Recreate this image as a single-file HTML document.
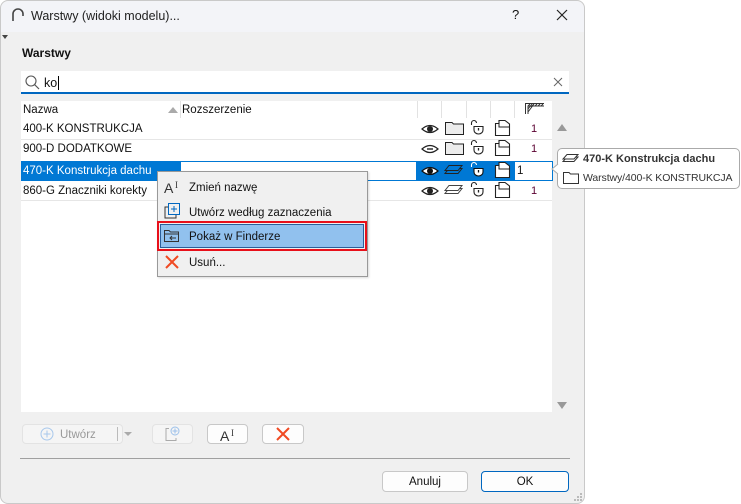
<!DOCTYPE html>
<html><head><meta charset="utf-8"><style>
*{box-sizing:border-box;margin:0;padding:0}
body{width:741px;height:504px;background:#fff;font-family:"Liberation Sans",sans-serif;font-size:11.5px;color:#111;position:relative;overflow:hidden}
.a{position:absolute}
.t{position:absolute;white-space:nowrap;line-height:14px}
svg{position:absolute;overflow:visible}
.btn{position:absolute;background:#fdfdfd;border:1px solid #c8c8c8;border-radius:4px}
.rowline{position:absolute;left:21px;width:531px;height:1px;background:#e6e6e6}
.num{position:absolute;font-size:11px;color:#5a0030;width:20px;text-align:center}
.ai{position:absolute;font-size:14px;color:#333;line-height:14px}
.ai b{position:absolute;font-weight:normal;font-size:9px;left:11px;top:-3px;font-family:"Liberation Serif",serif}
</style></head><body>
<svg width="0" height="0" style="position:absolute">
<defs>
<g id="eye"><path d="M1 6 Q9 -1 17 6 Q9 13 1 6Z" fill="none" stroke="#222" stroke-width="1.2"/><circle cx="9" cy="6" r="3" fill="#222"/></g>
<g id="eye2"><path d="M1 6 Q9 -1 17 6 Q9 13 1 6Z" fill="none" stroke="#222" stroke-width="1.2"/><path d="M6 6 H12" stroke="#222" stroke-width="1.4"/></g>
<g id="fold"><path d="M0.5 2.5 H7 L8.5 4 H18.5 V14.5 H0.5Z" fill="#ececec" stroke="#222"/></g>
<g id="lock"><path d="M1.5 5 V3 A2.5 2.5 0 0 1 6.5 3" fill="none" stroke="#222" stroke-width="1.1"/><path d="M4 6.5 H13 V10 A4.5 4 0 0 1 4 10Z" fill="#fff" stroke="#222" stroke-width="1.1"/><path d="M8.5 8 V10.5" stroke="#222" stroke-width="1.3"/></g>
<g id="page"><path d="M0.5 3.5 H4 V0.5 H10 L14.5 4 V15.5 H0.5Z" fill="#fff" stroke="#222" stroke-width="1.1"/><path d="M4 3.5 V7 H14.5" fill="none" stroke="#222"/></g>
<g id="plane"><path d="M4 3.5 H17 L13 8.5 H0Z" fill="none" stroke="#444"/><path d="M4 0.5 H17 L13 5.5 H0Z" fill="#fff" stroke="#444"/></g>
</defs></svg>

<div class="a" style="left:0;top:0;width:585px;height:504px;background:#f0f0f0;border:1px solid #c9c9c9;border-radius:8px"></div>
<div class="a" style="left:1px;top:1px;width:583px;height:31px;background:#f3f4f8;border-radius:8px 8px 0 0"></div>
<svg style="left:11px;top:8px" width="14" height="14"><path d="M2 13 V6 A5 5 0 0 1 12 6 V8" fill="none" stroke="#444" stroke-width="1.6"/></svg>
<div class="t" style="left:31px;top:9px;font-size:12.5px;color:#222">Warstwy (widoki modelu)...</div>
<div class="t" style="left:512px;top:8px;font-size:13px">?</div>
<svg style="left:556px;top:9px" width="12" height="12"><path d="M1 1 L11 11 M11 1 L1 11" stroke="#222" stroke-width="1.2"/></svg>
<svg style="left:2px;top:35px" width="6" height="5"><path d="M0 0 H6 L3 4Z" fill="#444"/></svg>

<div class="t" style="left:22px;top:46px;font-weight:bold;font-size:12px">Warstwy</div>
<div class="a" style="left:21px;top:71px;width:548px;height:23px;background:#fff;border-bottom:2px solid #0067c0"></div>
<svg style="left:25px;top:75px" width="15" height="15"><circle cx="6" cy="6" r="5" fill="none" stroke="#555" stroke-width="1.1"/><path d="M9.5 9.5 L14 14" stroke="#555" stroke-width="1.2"/></svg>
<div class="t" style="left:44px;top:76px;font-size:12.5px">ko<span style="border-left:1px solid #000;margin-left:1px"></span></div>
<svg style="left:553px;top:77px" width="10" height="10"><path d="M1 1 L9 9 M9 1 L1 9" stroke="#666" stroke-width="1"/></svg>

<div class="a" style="left:21px;top:101px;width:531px;height:311px;background:#fff"></div>
<div class="a" style="left:180px;top:101px;width:1px;height:17px;background:#e2e2e2"></div>
<div class="a" style="left:417px;top:101px;width:1px;height:17px;background:#e2e2e2"></div>
<div class="a" style="left:441px;top:101px;width:1px;height:17px;background:#e2e2e2"></div>
<div class="a" style="left:466px;top:101px;width:1px;height:17px;background:#e2e2e2"></div>
<div class="a" style="left:490px;top:101px;width:1px;height:17px;background:#e2e2e2"></div>
<div class="a" style="left:514px;top:101px;width:1px;height:17px;background:#e2e2e2"></div>
<div class="t" style="left:23px;top:103px">Nazwa</div>
<svg style="left:168px;top:107px" width="10" height="6"><path d="M0 6 L5 0 L10 6Z" fill="#aaa"/></svg>
<div class="t" style="left:182px;top:103px">Rozszerzenie</div>
<svg style="left:525px;top:103px" width="20" height="12"><path d="M0.5 11 V0.5 H19" fill="none" stroke="#333"/><path d="M3 11 V3 L5 1 M3 6 L7 1 M3 9 L9 1 M6 4 L9 1 M10 3 L12 1 M13 3 L15 1 M16 3 L18 1 M3 3 H19" fill="none" stroke="#333"/></svg>

<div class="rowline" style="top:139px"></div>
<div class="rowline" style="top:200px"></div>

<div class="t" style="left:23px;top:122px">400-K KONSTRUKCJA</div>
<svg style="left:421px;top:123px"><use href="#eye"/></svg>
<svg style="left:445px;top:120px"><use href="#fold"/></svg>
<svg style="left:470px;top:120px"><use href="#lock"/></svg>
<svg style="left:495px;top:120px"><use href="#page"/></svg>
<div class="num" style="left:524px;top:123px">1</div>

<div class="t" style="left:23px;top:142px">900-D DODATKOWE</div>
<svg style="left:421px;top:143px"><use href="#eye2"/></svg>
<svg style="left:445px;top:140px"><use href="#fold"/></svg>
<svg style="left:470px;top:140px"><use href="#lock"/></svg>
<svg style="left:495px;top:140px"><use href="#page"/></svg>
<div class="num" style="left:524px;top:143px">1</div>

<div class="a" style="left:21px;top:161px;width:532px;height:20px;background:#0078d4"></div>
<div class="a" style="left:181px;top:162px;width:235px;height:18px;background:#fff"></div>
<div class="a" style="left:515px;top:162px;width:37px;height:18px;background:#fff"></div>
<div class="t" style="left:23px;top:164px;color:#fff">470-K Konstrukcja dachu</div>
<svg style="left:421px;top:165px"><path d="M1 6 Q9 -1 17 6 Q9 13 1 6Z" fill="#fff" stroke="#111" stroke-width="1.2"/><circle cx="9" cy="6" r="3" fill="#111"/></svg>
<svg style="left:445px;top:165px"><path d="M4 3.5 H17 L13 8.5 H0Z" fill="none" stroke="#222"/><path d="M4 0.5 H17 L13 5.5 H0Z" fill="#0078d4" stroke="#222"/></svg>
<svg style="left:470px;top:162px"><path d="M1.5 5 V3 A2.5 2.5 0 0 1 6.5 3" fill="none" stroke="#fff" stroke-width="1.1"/><path d="M4 6.5 H13 V10 A4.5 4 0 0 1 4 10Z" fill="#fff" stroke="#111" stroke-width="1.1"/><path d="M8.5 8 V10.5" stroke="#111" stroke-width="1.3"/></svg>
<svg style="left:495px;top:162px"><use href="#page"/></svg>
<div class="t" style="left:517px;top:164px">1</div>

<div class="t" style="left:23px;top:184px">860-G Znaczniki korekty</div>
<svg style="left:421px;top:185px"><use href="#eye"/></svg>
<svg style="left:445px;top:185px"><use href="#plane"/></svg>
<svg style="left:470px;top:182px"><use href="#lock"/></svg>
<svg style="left:495px;top:182px"><use href="#page"/></svg>
<div class="num" style="left:524px;top:185px">1</div>

<svg style="left:557px;top:124px" width="10" height="7"><path d="M0 7 L5 0 L10 7Z" fill="#999"/></svg>
<svg style="left:557px;top:402px" width="10" height="7"><path d="M0 0 L5 7 L10 0Z" fill="#999"/></svg>

<div class="a" style="left:557px;top:148px;width:183px;height:41px;background:#fff;border:1px solid #aaa;border-radius:5px"></div>
<svg style="left:551px;top:164px" width="8" height="10"><path d="M7 0 L1 5 L7 10" fill="#fff" stroke="#aaa"/></svg>
<svg style="left:563px;top:154px"><path d="M4 3 H15 L11 7.5 H0Z" fill="none" stroke="#333"/><path d="M4 0.5 H15 L11 5 H0Z" fill="#fff" stroke="#333"/></svg>
<div class="t" style="left:583px;top:152px;font-weight:bold;color:#333;font-size:11px">470-K Konstrukcja dachu</div>
<svg style="left:563px;top:170px"><path d="M0.5 2.5 H6 L7.5 4 H15.5 V13.5 H0.5Z" fill="#fff" stroke="#333"/></svg>
<div class="t" style="left:583px;top:171px;color:#333;font-size:10.5px;letter-spacing:-0.1px">Warstwy/400-K KONSTRUKCJA</div>

<div class="a" style="left:157px;top:171px;width:211px;height:106px;background:#f0f0f0;border:1px solid #999;box-shadow:1px 1px 2px rgba(0,0,0,.15)"></div>
<div class="ai" style="left:164px;top:181px">A<b>I</b></div>
<div class="t" style="left:189px;top:181px">Zmień nazwę</div>
<svg style="left:164px;top:203px" width="16" height="16"><rect x="1" y="4" width="11" height="11" fill="none" stroke="#333"/><rect x="4.5" y="0.5" width="11" height="11" fill="#f0f0f0" stroke="#0067c0"/><path d="M10 3 V9 M7 6 H13" stroke="#0067c0"/></svg>
<div class="t" style="left:189px;top:206px">Utwórz według zaznaczenia</div>
<div class="a" style="left:157px;top:221px;width:210px;height:30px;border:2px solid #e8101a"></div>
<div class="a" style="left:160px;top:224px;width:204px;height:24px;background:#91c1ee;border:1px solid #2b5f9a"></div>
<svg style="left:164px;top:229px" width="16" height="14"><path d="M0.5 1.5 H5 L6.5 3 H14.5 V12.5 H0.5Z" fill="none" stroke="#333"/><path d="M0.5 5 H14.5" stroke="#333"/><path d="M12 9 H6 M8 7 L6 9 L8 11" fill="none" stroke="#333"/></svg>
<div class="t" style="left:189px;top:230px">Pokaż w Finderze</div>
<svg style="left:165px;top:255px" width="14" height="14"><path d="M1 1 L13 13 M13 1 L1 13" stroke="#f04a23" stroke-width="2"/></svg>
<div class="t" style="left:189px;top:256px">Usuń...</div>

<div class="btn" style="left:22px;top:424px;width:101px;height:20px;border-color:#e3e3e3;background:#f5f5f5"></div>
<svg style="left:40px;top:427px" width="15" height="15"><circle cx="7" cy="7" r="6" fill="none" stroke="#a8c8ec"/><path d="M7 3.5 V10.5 M3.5 7 H10.5" stroke="#a8c8ec"/></svg>
<div class="t" style="left:60px;top:428px;color:#999">Utwórz</div>
<div class="a" style="left:117px;top:427px;width:1px;height:14px;background:#bbb"></div>
<svg style="left:124px;top:432px" width="8" height="5"><path d="M0 0 H8 L4 4Z" fill="#aaa"/></svg>
<div class="btn" style="left:152px;top:424px;width:41px;height:20px;border-color:#e3e3e3;background:#f5f5f5"></div>
<svg style="left:165px;top:426px" width="16" height="16"><path d="M4 2.5 H1 V14.5 H11 V12" fill="none" stroke="#aaa"/><circle cx="10" cy="5" r="4" fill="none" stroke="#9cc0ea"/><path d="M10 2.5 V7.5 M7.5 5 H12.5" stroke="#9cc0ea"/></svg>
<div class="btn" style="left:207px;top:424px;width:41px;height:20px"></div>
<div class="ai" style="left:220px;top:429px">A<b>I</b></div>
<div class="btn" style="left:262px;top:424px;width:42px;height:20px"></div>
<svg style="left:276px;top:427px" width="14" height="14"><path d="M1 1 L13 13 M13 1 L1 13" stroke="#f04a23" stroke-width="2"/></svg>

<div class="a" style="left:20px;top:458px;width:550px;height:1px;background:#a0a0a0"></div>
<div class="btn" style="left:382px;top:471px;width:86px;height:21px"></div>
<div class="t" style="left:382px;top:475px;width:86px;text-align:center">Anuluj</div>
<div class="btn" style="left:481px;top:471px;width:88px;height:21px;border-color:#0067c0"></div>
<div class="t" style="left:481px;top:475px;width:88px;text-align:center">OK</div>
<svg style="left:573px;top:492px" width="10" height="10"><g fill="#bbb"><rect x="7" y="1" width="2" height="2"/><rect x="4" y="4" width="2" height="2"/><rect x="7" y="4" width="2" height="2"/><rect x="1" y="7" width="2" height="2"/><rect x="4" y="7" width="2" height="2"/><rect x="7" y="7" width="2" height="2"/></g></svg>
</body></html>
